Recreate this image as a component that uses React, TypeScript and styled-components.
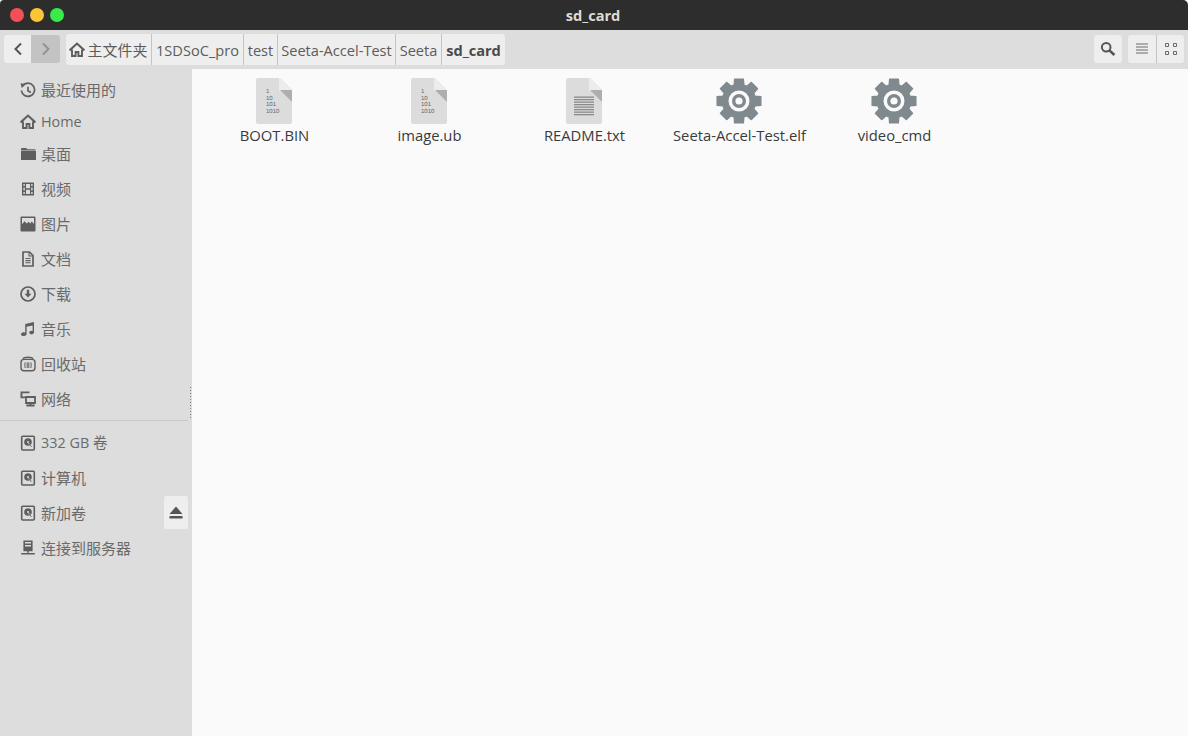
import React from 'react';
import styled, { createGlobalStyle } from 'styled-components';

const GlobalStyle = createGlobalStyle`
  html, body {
    margin: 0;
    padding: 0;
    background: #fafafa;
  }
  * {
    box-sizing: border-box;
  }
`;

const FONT = `"Open Sans", "Noto Sans CJK SC", sans-serif`;

const Window = styled.div`
  width: 1188px;
  height: 736px;
  display: flex;
  flex-direction: column;
  overflow: hidden;
  font-family: ${FONT};
`;

const TitleBar = styled.div`
  height: 30px;
  flex: none;
  display: flex;
  align-items: center;
  position: relative;
  padding-left: 10px;
  gap: 6px;
  background: #2d2d2d;
  border-radius: 4px 5px 0 0;
`;

const Light = styled.span<{ $color: string }>`
  width: 14px;
  height: 14px;
  border-radius: 50%;
  background: ${p => p.$color};
`;

const Title = styled.div`
  position: absolute;
  left: 0;
  right: 0;
  top: 0;
  line-height: 31px;
  text-align: center;
  color: #dfdbd2;
  font-size: 14.6px;
  font-weight: 700;
  padding-right: 2px;
`;

const Toolbar = styled.div`
  height: 39px;
  flex: none;
  display: flex;
  align-items: flex-start;
  padding: 4px 4px 0;
  background: #dddddd;
`;

const NavGroup = styled.div`
  display: flex;
  margin-top: 1px;
  height: 28px;
  border-radius: 3px;
  overflow: hidden;
`;

const NavButton = styled.div<{ $disabled?: boolean; $w: number }>`
  width: ${p => p.$w}px;
  display: flex;
  align-items: center;
  justify-content: center;
  background: ${p => (p.$disabled ? '#c3c3c3' : '#eeeeee')};
  color: ${p => (p.$disabled ? '#929292' : '#555555')};
`;

const PathBar = styled.div`
  display: flex;
  height: 31px;
  margin-left: 6px;
  border-radius: 3px;
  overflow: hidden;
  background: #eeeeee;
`;

const Crumb = styled.div<{ $w: number; $current?: boolean; $first?: boolean }>`
  width: ${p => p.$w}px;
  display: flex;
  align-items: center;
  justify-content: center;
  gap: 2px;
  white-space: nowrap;
  font-size: ${p => (p.$first ? 15 : 14.6)}px;
  font-weight: ${p => (p.$current ? 700 : 400)};
  color: ${p => (p.$current ? '#4a4a4a' : '#5c5c5c')};
  border-left: ${p => (p.$first ? 'none' : '1px solid #c4c4c4')};
`;

const Spacer = styled.div`
  flex: 1;
`;

const ToolButton = styled.div<{ $w: number; $divided?: boolean }>`
  width: ${p => p.$w}px;
  height: 28px;
  display: flex;
  align-items: center;
  justify-content: center;
  background: #eeeeee;
  color: #6b6b6b;
  border-left: ${p => (p.$divided ? '1px solid #c4c4c4' : 'none')};
`;

const ToolGroup = styled.div`
  display: flex;
  margin-top: 1px;
  margin-left: 6px;
  border-radius: 3px;
  overflow: hidden;
`;

const SearchWrap = styled.div`
  margin-top: 1px;
  border-radius: 3px;
  overflow: hidden;
`;

const Body = styled.div`
  flex: 1;
  display: flex;
  min-height: 0;
`;

const Sidebar = styled.div`
  width: 192px;
  flex: none;
  position: relative;
  padding-top: 12px;
  background: #dddddd;
`;

const Row = styled.div<{ $h?: number }>`
  height: ${p => p.$h ?? 35}px;
  position: relative;
  display: flex;
  align-items: flex-start;
  padding-left: 20px;
  color: #5e5e5e;
`;

const RowIcon = styled.span`
  width: 16px;
  height: 18px;
  flex: none;
  display: flex;
  align-items: center;
  justify-content: center;
`;

const RowLabel = styled.span<{ $latin?: boolean }>`
  margin-left: 5px;
  font-size: ${p => (p.$latin ? 14.4 : 15)}px;
  line-height: 18px;
  color: #6a6a6a;
  white-space: nowrap;
`;

const Divider = styled.div`
  height: 1px;
  width: 188px;
  margin: 12px 0 13px;
  background: #c8c8c8;
`;

const Eject = styled.div`
  position: absolute;
  left: 164px;
  top: -8px;
  width: 24px;
  height: 33px;
  display: flex;
  align-items: center;
  justify-content: center;
  border-radius: 2px;
  background: #eeeeee;
`;

const Grip = styled.div`
  position: absolute;
  left: 189px;
  top: 317px;
  width: 3px;
  height: 32px;
  background-image: radial-gradient(#7d7d7d 0.7px, transparent 0.8px);
  background-size: 3px 3px;
`;

const Files = styled.div`
  flex: 1;
  display: grid;
  grid-template-columns: repeat(auto-fill, 155px);
  grid-auto-rows: 80px;
  padding: 9px 0 0 4px;
  background: #fafafa;
`;

const FileItem = styled.div`
  display: flex;
  flex-direction: column;
  align-items: center;
`;

const FileName = styled.div`
  margin-top: 1px;
  padding-left: 2px;
  font-size: 14.8px;
  line-height: 20px;
  color: #3a3a3a;
  white-space: nowrap;
`;

const Stroke = {
  fill: 'none',
  stroke: 'currentColor',
  strokeWidth: 1.5
};

const HistoryIcon = () => (
  <svg width="17" height="17" viewBox="0 0 16 16">
    <path d="M2.6 3.4A6.6 6.6 0 1 1 1.4 8" {...Stroke} strokeWidth={1.7} />
    <path d="M0.6 0.8 5.2 1.4 1.8 5.8Z" fill="currentColor" />
    <path d="M8 4.2V8.2L10.8 10" {...Stroke} strokeWidth={1.7} />
  </svg>
);

const HomeIcon = () => (
  <svg width="16" height="16" viewBox="0 0 16 16">
    <path d="M0.6 8.4 8 1.6l7.4 6.8" fill="none" stroke="currentColor" strokeWidth="2" />
    <path d="M3 7.6V14h3.6V10h2.8v4H13V7.6" {...Stroke} strokeWidth={1.9} />
  </svg>
);

const FolderIcon = () => (
  <svg width="16" height="16" viewBox="0 0 16 16">
    <path d="M1 3.2C1 2.5 1.5 2 2.2 2h4l1.2 1.2h7.4c.5 0 .7.3.7.7H1Z" fill="currentColor" />
    <rect x="1" y="4.6" width="15" height="9.4" rx="0.6" fill="currentColor" />
  </svg>
);

const FilmIcon = () => (
  <svg width="16" height="16" viewBox="0 0 16 16">
    <path fillRule="evenodd" fill="currentColor" d="M2 1.5h12v13H2ZM3.4 3v2h1.4V3Zm0 3.6v2.8h1.4V6.6Zm0 4.4v2h1.4v-2Zm7.8-8v2h1.4V3Zm0 3.6v2.8h1.4V6.6Zm0 4.4v2h1.4v-2ZM6 3v4.2h4V3Zm0 5.8V13h4V8.8Z" />
  </svg>
);

const PictureIcon = () => (
  <svg width="16" height="16" viewBox="0 0 16 16">
    <path fillRule="evenodd" fill="currentColor" d="M1.4 0.5h13.2c.5 0 .9.4.9.9v13.2c0 .5-.4.9-.9.9H1.4c-.5 0-.9-.4-.9-.9V1.4c0-.5.4-.9.9-.9ZM2 2v6.2l2.6-3 2.2 2.4 1.8-1.8 1.6 1.8 1.6-2.2L14 8V2Z" />
  </svg>
);

const DocumentIcon = () => (
  <svg width="16" height="16" viewBox="0 0 16 16">
    <path d="M3 1h6.5L13 4.5V15H3Z" fill="none" stroke="currentColor" strokeWidth="1.7" strokeLinejoin="round" />
    <path d="M9 1v4h4M5.4 7.5h5.2M5.4 9.6h5.2M5.4 11.7h5.2" {...Stroke} strokeWidth={1.1} />
  </svg>
);

const DownloadIcon = () => (
  <svg width="16" height="16" viewBox="0 0 16 16">
    <circle cx="8" cy="8" r="7" {...Stroke} strokeWidth={1.7} />
    <path d="M6.8 3.8h2.4v4h2.3L8 11.6 4.5 7.8h2.3Z" fill="currentColor" />
  </svg>
);

const MusicIcon = () => (
  <svg width="16" height="16" viewBox="0 0 16 16">
    <path d="M5.2 3 14 1v10.4h-1.4V4.4L6.6 5.8v7.4H5.2Z" fill="currentColor" />
    <ellipse cx="3.6" cy="13.2" rx="2.6" ry="1.9" fill="currentColor" />
    <ellipse cx="11.6" cy="11.6" rx="2.4" ry="1.8" fill="currentColor" />
  </svg>
);

const TrashIcon = () => (
  <svg width="16" height="16" viewBox="0 0 16 16">
    <rect x="1" y="3.4" width="14" height="11.4" rx="3" fill="none" stroke="currentColor" strokeWidth="1.4" />
    <path d="M3 2.6C4 .9 12 .9 13 2.6" {...Stroke} />
    <path d="M5.2 6.4c-.5 2-.5 3.6 0 5.6M7.2 6.4v5.6M8.8 6.4v5.6M10.8 6.4c.5 2 .5 3.6 0 5.6" {...Stroke} strokeWidth={1} />
  </svg>
);

const NetworkIcon = () => (
  <svg width="16" height="16" viewBox="0 0 16 16">
    <path d="M0.5 0.5h9v1.8H2.4v3.2H5v1.8H0.5Z" fill="currentColor" />
    <path d="M6 6h9v6H6Z" fill="none" stroke="currentColor" strokeWidth="1.8" />
    <path d="M9.7 12h1.6v2H9.7ZM6.4 13.6h8.2v1.8H6.4Z" fill="currentColor" />
  </svg>
);

const DriveIcon = () => (
  <svg width="16" height="16" viewBox="0 0 16 16">
    <rect x="1.7" y="1.2" width="12.6" height="13.8" rx="1" fill="none" stroke="currentColor" strokeWidth="1.6" />
    <circle cx="8" cy="7" r="3.8" fill="currentColor" />
    <circle cx="8" cy="7" r="1" fill="#dddddd" />
    <path d="M8.6 8.4l2.8 3.4" stroke="#dddddd" strokeWidth="1.2" />
    <path d="M9 8.9l2.4 2.9" stroke="currentColor" strokeWidth="1" />
  </svg>
);

const ServerIcon = () => (
  <svg width="16" height="16" viewBox="0 0 16 16">
    <path fillRule="evenodd" fill="currentColor" d="M3.4 0.6h9.2v10.6H3.4ZM5 2.1v1.5h6V2.1Zm0 3v1.5h6V5.1Zm2.2 6.1h1.6v1.6H7.2ZM1.2 13h13.6v1.6H1.2Z" />
  </svg>
);

const EjectIcon = () => (
  <svg width="14" height="13" viewBox="0 0 14 13">
    <path d="M7 0.5 13.5 8H0.5Z M0.5 10h13v2.4H0.5Z" fill="#555555" />
  </svg>
);

const ChevronIcon = ({ dir }: { dir: 'left' | 'right' }) => (
  <svg width="10" height="14" viewBox="0 0 10 14">
    <path d={dir === 'left' ? 'M8 1.5 2.5 7 8 12.5' : 'M2 1.5 7.5 7 2 12.5'} fill="none" stroke="currentColor" strokeWidth="2" />
  </svg>
);

const SearchIcon = () => (
  <svg width="16" height="16" viewBox="0 0 16 16">
    <circle cx="6.2" cy="6.2" r="4.3" fill="none" stroke="#555555" strokeWidth="2" />
    <path d="M9.4 9.4 14.4 14" stroke="#555555" strokeWidth="2.6" />
  </svg>
);

const ListIcon = () => (
  <svg width="14" height="12" viewBox="0 0 14 12">
    <path d="M1 1h12M1 4h12M1 7h12M1 10h12" stroke="currentColor" strokeWidth="1" />
  </svg>
);

const GridIcon = () => (
  <svg width="14" height="14" viewBox="0 0 14 14">
    <path d="M1.5 1.5h3v3h-3ZM9.5 1.5h3v3h-3ZM1.5 9.5h3v3h-3ZM9.5 9.5h3v3h-3Z" fill="none" stroke="currentColor" strokeWidth="1" />
  </svg>
);

const BINARY = ['1', '10', '101', '1010'];

const FileIcon = ({ binary }: { binary?: boolean }) => (
  <svg width="36" height="46" viewBox="0 0 36 46">
    <path d="M2 0h22l12 12v32a2 2 0 0 1-2 2H2a2 2 0 0 1-2-2V2a2 2 0 0 1 2-2Z" fill="#dcdcdc" />
    <path d="M23 0h1l12 12v1H23Z" fill="#ececec" />
    <path d="M24 12h12v12Z" fill="#aeaeae" />
    {binary &&
      BINARY.map((line, i) => (
        <text key={line} x="10" y={15 + i * 6.7} fontFamily="Liberation Sans, sans-serif" fontSize="6" fill="#666666" style={{ textRendering: 'geometricPrecision' }}>
          {line}
        </text>
      ))}
    {!binary &&
      Array.from({ length: 8 }).map((_, i) => (
        <rect key={i} x="8" y={18.5 + i * 2.5} width="20" height="1.3" fill="#8a8a8a" />
      ))}
  </svg>
);

// eight teeth, computed round the centre
const gearPath = () => {
  const points: string[] = [];
  const cx = 23;
  const cy = 23;
  for (let i = 0; i < 8; i++) {
    const a = (i * Math.PI) / 4 - Math.PI / 2;
    const corners: [number, number][] = [
      [16.8, -0.3],
      [22.4, -0.2],
      [22.4, 0.2],
      [16.8, 0.3]
    ];
    corners.forEach(([r, d]) => {
      const x = cx + r * Math.cos(a + d);
      const y = cy + r * Math.sin(a + d);
      points.push(`${x.toFixed(2)} ${y.toFixed(2)}`);
    });
  }
  return `M${points.join('L')}Z`;
};

const GearIcon = () => (
  <svg width="46" height="46" viewBox="0 0 46 46">
    <path d={gearPath()} fill="#7f898e" stroke="#7f898e" strokeWidth="1.2" strokeLinejoin="round" />
    <circle cx="23" cy="23" r="10.5" fill="#fafafa" />
    <circle cx="23" cy="23" r="7" fill="#7f898e" />
    <circle cx="23" cy="23" r="3.6" fill="#fafafa" />
  </svg>
);

const crumbs = [
  { label: '1SDSoC_pro', w: 92 },
  { label: 'test', w: 34 },
  { label: 'Seeta-Accel-Test', w: 118 },
  { label: 'Seeta', w: 46 }
];

const places = [
  { label: '最近使用的', icon: <HistoryIcon />, h: 32 },
  { label: 'Home', icon: <HomeIcon />, h: 32, latin: true },
  { label: '桌面', icon: <FolderIcon /> },
  { label: '视频', icon: <FilmIcon /> },
  { label: '图片', icon: <PictureIcon /> },
  { label: '文档', icon: <DocumentIcon /> },
  { label: '下载', icon: <DownloadIcon /> },
  { label: '音乐', icon: <MusicIcon /> },
  { label: '回收站', icon: <TrashIcon /> },
  { label: '网络', icon: <NetworkIcon />, h: 18 }
];

const files = [
  { name: 'BOOT.BIN', kind: 'binary' },
  { name: 'image.ub', kind: 'binary' },
  { name: 'README.txt', kind: 'text' },
  { name: 'Seeta-Accel-Test.elf', kind: 'exec' },
  { name: 'video_cmd', kind: 'exec' }
];

const App: React.FC = () => {
  return (
    <Window>
      <GlobalStyle />
      <TitleBar>
        <Light $color="#f25056" />
        <Light $color="#fac536" />
        <Light $color="#39ea49" />
        <Title>sd_card</Title>
      </TitleBar>
      <Toolbar>
        <NavGroup>
          <NavButton $w={27}>
            <ChevronIcon dir="left" />
          </NavButton>
          <NavButton $w={29} $disabled>
            <ChevronIcon dir="right" />
          </NavButton>
        </NavGroup>
        <PathBar>
          <Crumb $w={85} $first>
            <HomeIcon />
            主文件夹
          </Crumb>
          {crumbs.map(c => (
            <Crumb key={c.label} $w={c.w}>
              {c.label}
            </Crumb>
          ))}
          <Crumb $w={64} $current>
            sd_card
          </Crumb>
        </PathBar>
        <Spacer />
        <SearchWrap>
          <ToolButton $w={28}>
            <SearchIcon />
          </ToolButton>
        </SearchWrap>
        <ToolGroup>
          <ToolButton $w={28}>
            <ListIcon />
          </ToolButton>
          <ToolButton $w={28} $divided>
            <GridIcon />
          </ToolButton>
        </ToolGroup>
      </Toolbar>
      <Body>
        <Sidebar>
          {places.map(p => (
            <Row key={p.label} $h={p.h}>
              <RowIcon>{p.icon}</RowIcon>
              <RowLabel $latin={p.latin}>{p.label}</RowLabel>
            </Row>
          ))}
          <Divider />
          <Row>
            <RowIcon>
              <DriveIcon />
            </RowIcon>
            <RowLabel $latin>332 GB 卷</RowLabel>
          </Row>
          <Row>
            <RowIcon>
              <DriveIcon />
            </RowIcon>
            <RowLabel>计算机</RowLabel>
          </Row>
          <Row>
            <RowIcon>
              <DriveIcon />
            </RowIcon>
            <RowLabel>新加卷</RowLabel>
            <Eject>
              <EjectIcon />
            </Eject>
          </Row>
          <Row>
            <RowIcon>
              <ServerIcon />
            </RowIcon>
            <RowLabel>连接到服务器</RowLabel>
          </Row>
          <Grip />
        </Sidebar>
        <Files>
          {files.map(f => (
            <FileItem key={f.name}>
              {f.kind === 'exec' ? <GearIcon /> : <FileIcon binary={f.kind === 'binary'} />}
              <FileName>{f.name}</FileName>
            </FileItem>
          ))}
        </Files>
      </Body>
    </Window>
  );
};

export default App;
